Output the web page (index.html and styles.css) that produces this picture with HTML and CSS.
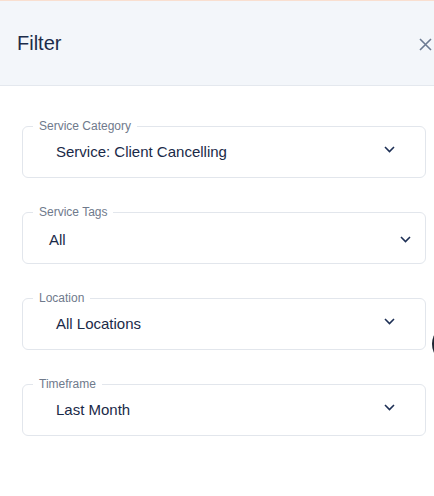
FILE: index.html
```html
<!DOCTYPE html>
<html lang="en">
<head>
<meta charset="utf-8">
<title>Filter</title>
<link rel="stylesheet" href="styles.css">
</head>
<body>
<div class="panel">
  <header class="panel-header">
    <h1 class="panel-title">Filter</h1>
    <button class="close-btn" aria-label="Close">
      <svg width="13" height="13" viewBox="0 0 13 13"><path d="M1 1L12 12M12 1L1 12" stroke="#6b7a92" stroke-width="1.6" fill="none"/></svg>
    </button>
  </header>
  <form class="panel-body">
    <div class="field">
      <span class="field-label">Service Category</span>
      <div class="field-control">
        <span class="field-value">Service: Client Cancelling</span>
        <svg class="chevron" width="11" height="7" viewBox="0 0 11 7"><path d="M1 1L5.5 5.5L10 1" stroke="#1d2f55" stroke-width="1.6" fill="none"/></svg>
      </div>
    </div>
    <div class="field">
      <span class="field-label">Service Tags</span>
      <div class="field-control field-control--tight">
        <span class="field-value">All</span>
        <svg class="chevron" width="11" height="7" viewBox="0 0 11 7"><path d="M1 1L5.5 5.5L10 1" stroke="#1d2f55" stroke-width="1.6" fill="none"/></svg>
      </div>
    </div>
    <div class="field">
      <span class="field-label">Location</span>
      <div class="field-control">
        <span class="field-value">All Locations</span>
        <svg class="chevron" width="11" height="7" viewBox="0 0 11 7"><path d="M1 1L5.5 5.5L10 1" stroke="#1d2f55" stroke-width="1.6" fill="none"/></svg>
      </div>
    </div>
    <div class="field">
      <span class="field-label">Timeframe</span>
      <div class="field-control">
        <span class="field-value">Last Month</span>
        <svg class="chevron" width="11" height="7" viewBox="0 0 11 7"><path d="M1 1L5.5 5.5L10 1" stroke="#1d2f55" stroke-width="1.6" fill="none"/></svg>
      </div>
    </div>
  </form>
</div>
<div class="dot-clip"><div class="floating-dot"></div></div>
</body>
</html>
```
FILE: styles.css
```css
* { box-sizing: border-box; }
html, body { margin: 0; padding: 0; }
body {
  width: 434px;
  height: 496px;
  overflow: hidden;
  background: #ffffff;
  font-family: "Liberation Sans", Arial, sans-serif;
  position: relative;
}
.panel { width: 434px; }
.panel-header {
  height: 86px;
  background: #f3f6fa;
  border-top: 1px solid #f9dfd0;
  border-bottom: 1px solid #e4e8ee;
  display: flex;
  align-items: center;
  justify-content: space-between;
  padding: 0 0 0 17px;
}
.panel-title {
  margin: 0;
  font-size: 20px;
  font-weight: 400;
  color: #1c2c4a;
  line-height: 1;
}
.close-btn {
  border: 0;
  background: none;
  padding: 0;
  margin-right: 1px;
  margin-top: 2px;
  width: 14px;
  height: 15px;
  display: flex;
  align-items: center;
  justify-content: flex-start;
}
.panel-body {
  padding: 40px 8px 0 22px;
  display: flex;
  flex-direction: column;
  gap: 34px;
}
.field {
  position: relative;
  width: 404px;
  height: 52px;
  border: 1px solid #e2e6ec;
  border-radius: 6px;
}
.field-label {
  position: absolute;
  left: 10px;
  top: -8px;
  padding: 0 6px;
  background: #ffffff;
  font-size: 12px;
  line-height: 14px;
  color: #6f7a8c;
}
.field-control {
  height: 100%;
  display: flex;
  align-items: center;
  justify-content: space-between;
  padding: 0 30px 2px 33px;
}
.field-control--tight {
  padding: 2px 14px 0 26px;
}
.field-value {
  font-size: 15px;
  color: #1a2a48;
}
.chevron { display: block; margin-top: -4px; }
.field-control--tight .chevron { margin-top: 0; }
.dot-clip {
  position: absolute;
  left: 432px;
  top: 324px;
  width: 2px;
  height: 40px;
  overflow: hidden;
}
.floating-dot {
  width: 40px;
  height: 40px;
  border-radius: 50%;
  background: #1f2633;
}
```
